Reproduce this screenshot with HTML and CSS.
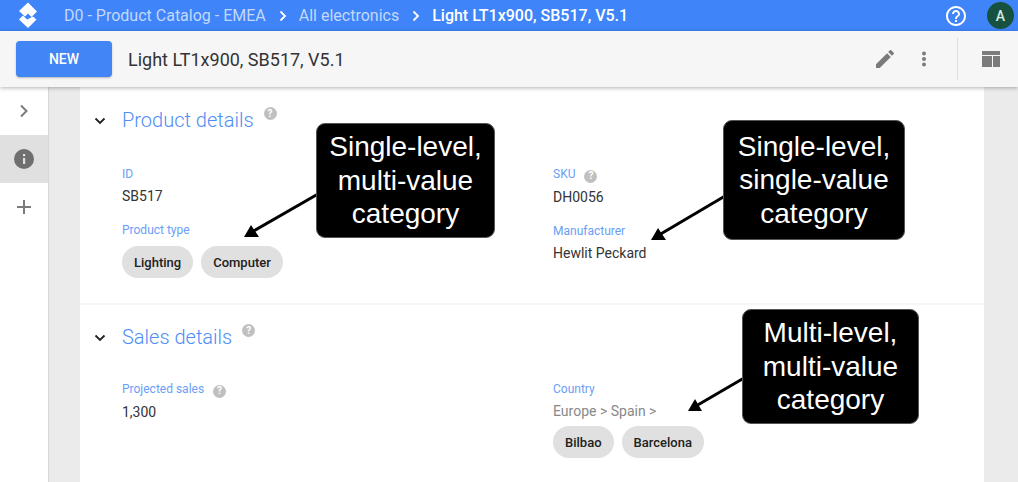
FILE: index.html
```html
<!DOCTYPE html>
<html lang="en">
<head>
<meta charset="utf-8">
<title>Light LT1x900, SB517, V5.1</title>
<link rel="stylesheet" href="styles.css">
</head>
<body>
<header class="topbar">
  <svg class="logo" width="20" height="26" viewBox="0 0 20 26"><path d="M10 0.500 L19 9.500 L13.500 15 L10 11.500 L7 14.500 L1 9 Z" fill="#fff"/><path d="M1 17.500 L5 13.500 L9 17.500 L15 14.500 L18.500 17.500 L10 26 Z" fill="#fff"/></svg>
  <nav class="crumbs">
    <span class="crumb">D0 - Product Catalog - EMEA</span>
    <svg class="crumb-sep" width="10" height="12" viewBox="0 0 10 12"><path d="M2.500 1.500 L7 6 L2.500 10.500" fill="none" stroke="#fff" stroke-width="1.800"/></svg>
    <span class="crumb">All electronics</span>
    <svg class="crumb-sep" width="10" height="12" viewBox="0 0 10 12"><path d="M2.500 1.500 L7 6 L2.500 10.500" fill="none" stroke="#fff" stroke-width="1.800"/></svg>
    <span class="crumb crumb-current">Light LT1x900, SB517, V5.1</span>
  </nav>
  <svg class="help" width="24" height="24" viewBox="0 0 24 24"><path fill="#fff" d="M11 18h2v-2h-2v2zm1-16C6.480 2 2 6.480 2 12s4.480 10 10 10 10-4.480 10-10S17.520 2 12 2zm0 18c-4.410 0-8-3.590-8-8s3.590-8 8-8 8 3.590 8 8-3.590 8-8 8zm0-14c-2.210 0-4 1.790-4 4h2c0-1.100.9-2 2-2s2 .9 2 2c0 2-3 1.750-3 5h2c0-2.250 3-2.500 3-5 0-2.210-1.790-4-4-4z"/></svg>
  <div class="avatar">A</div>
</header>

<div class="toolbar">
  <button class="new-btn">NEW</button>
  <h1 class="doc-title">Light LT1x900, SB517, V5.1</h1>
  <svg class="tool-edit" width="24" height="24" viewBox="0 0 24 24"><path fill="#7b7b7b" d="M3 17.250V21h3.750L17.810 9.940l-3.750-3.750L3 17.250zM20.710 7.040a1 1 0 0 0 0-1.410l-2.340-2.340a1 1 0 0 0-1.410 0l-1.830 1.830 3.750 3.750 1.830-1.830z"/></svg>
  <svg class="tool-more" width="24" height="24" viewBox="0 0 24 24"><circle cx="12" cy="6.500" r="2" fill="#7b7b7b"/><circle cx="12" cy="12" r="2" fill="#7b7b7b"/><circle cx="12" cy="17.500" r="2" fill="#7b7b7b"/></svg>
  <div class="tool-divider"></div>
  <svg class="tool-layout" width="18" height="16" viewBox="0 0 18 16"><path fill="#7b7b7b" d="M0 0h18v4H0zM0 5h10v11H0zM11 5h7v11h-7z"/></svg>
</div>

<div class="main">
  <aside class="rail">
    <div class="rail-item">
      <svg width="24" height="24" viewBox="0 0 24 24"><path d="M9 6.500 L14.500 12 L9 17.500" fill="none" stroke="#7b7b7b" stroke-width="2"/></svg>
    </div>
    <div class="rail-item rail-active">
      <svg width="24" height="24" viewBox="0 0 24 24"><circle cx="12" cy="12" r="10" fill="#6f6f6f"/><path fill="#e0e0e0" d="M11 11h2.200v6H11zM11 7h2.200v2.200H11z"/></svg>
    </div>
    <div class="rail-item">
      <svg width="24" height="24" viewBox="0 0 24 24"><path fill="#7b7b7b" d="M11 5h2v6h6v2h-6v6h-2v-6H5v-2h6z"/></svg>
    </div>
  </aside>

  <main class="card">
    <section class="section section-product">
      <div class="section-head">
        <svg class="chev" width="12" height="8" viewBox="0 0 12 8"><path d="M1.500 1.500 L6 6 L10.500 1.500" fill="none" stroke="#212121" stroke-width="1.800"/></svg>
        <h2 class="section-title">Product details</h2>
        <span class="q q-head">?</span>
      </div>
      <div class="fields">
        <div class="col">
          <div class="field">
            <div class="label">ID</div>
            <div class="value">SB517</div>
          </div>
          <div class="field">
            <div class="label">Product type</div>
            <div class="chips"><span class="chip">Lighting</span><span class="chip">Computer</span></div>
          </div>
        </div>
        <div class="col">
          <div class="field">
            <div class="label">SKU <span class="q">?</span></div>
            <div class="value">DH0056</div>
          </div>
          <div class="field">
            <div class="label">Manufacturer</div>
            <div class="value">Hewlit Peckard</div>
          </div>
        </div>
      </div>
    </section>
    <section class="section section-sales">
      <div class="section-head">
        <svg class="chev" width="12" height="8" viewBox="0 0 12 8"><path d="M1.500 1.500 L6 6 L10.500 1.500" fill="none" stroke="#212121" stroke-width="1.800"/></svg>
        <h2 class="section-title">Sales details</h2>
        <span class="q q-head">?</span>
      </div>
      <div class="fields">
        <div class="col">
          <div class="field">
            <div class="label">Projected sales <span class="q">?</span></div>
            <div class="value">1,300</div>
          </div>
        </div>
        <div class="col">
          <div class="field">
            <div class="label">Country</div>
            <div class="value value-muted">Europe &gt; Spain &gt;</div>
            <div class="chips chips-tight"><span class="chip">Bilbao</span><span class="chip">Barcelona</span></div>
          </div>
        </div>
      </div>
    </section>
  </main>
</div>

<div class="callout callout-a">Single-level,<br>multi-value<br>category</div>
<div class="callout callout-b">Single-level,<br>single-value<br>category</div>
<div class="callout callout-c">Multi-level,<br>multi-value<br>category</div>

<svg class="arrows" width="1018" height="482" viewBox="0 0 1018 482">
  <path d="M318 194 L252 232" stroke="#000" stroke-width="3" fill="none"/>
  <path d="M244 237 L251 225 L259 237 Z" fill="#000"/>
  <path d="M725 196 L659 235" stroke="#000" stroke-width="3" fill="none"/>
  <path d="M651 240 L658 228 L666 240 Z" fill="#000"/>
  <path d="M744 378 L696 406" stroke="#000" stroke-width="3" fill="none"/>
  <path d="M688 411 L695 399 L702 411 Z" fill="#000"/>
</svg>
</body>
</html>
```

FILE: styles.css
```css
* { box-sizing: border-box; }
html, body { margin: 0; height: 100%; }
body {
  width: 1018px;
  height: 482px;
  overflow: hidden;
  position: relative;
  font-family: Roboto, "Liberation Sans", sans-serif;
  background: #ebebeb;
  color: #212121;
}
.topbar {
  height: 31px;
  background: #3f84f8;
  display: flex;
  align-items: center;
  padding-left: 18px;
}
.logo { flex: none; margin-top: -2px; }
.crumbs {
  display: flex;
  align-items: center;
  margin-left: 26px;
  font-size: 16px;
  flex: 1;
}
.crumb { color: #c3d8fb; }
.crumb-current { color: #fff; font-weight: 500; }
.crumb-sep { margin: 0 11px 0 12px; flex: none; }
.help { flex: none; margin-right: 19px; }
.avatar {
  width: 27px;
  height: 27px;
  margin-right: 4px;
  border-radius: 50%;
  background: #17513f;
  color: #d9e8e2;
  font-size: 14px;
  font-weight: 500;
  display: flex;
  align-items: center;
  justify-content: center;
}
.toolbar {
  height: 56px;
  background: #f6f6f6;
  display: flex;
  align-items: center;
  padding-left: 16px;
  box-shadow: 0 1px 4px rgba(0,0,0,.3);
  position: relative;
  z-index: 2;
}
.new-btn {
  width: 96px;
  height: 36px;
  background: #4285f4;
  color: #fff;
  border: 0;
  border-radius: 4px;
  font: 500 14px Roboto, sans-serif;
  box-shadow: 0 1px 2px rgba(0,0,0,.25);
}
.doc-title {
  margin: 0 0 0 16px;
  font-size: 18px;
  font-weight: 400;
  color: #333;
  flex: 1;
}
.tool-edit { margin-right: 15px; }
.tool-more { margin-right: 21px; }
.tool-divider { width: 1px; height: 42px; background: #dedede; margin-right: 24px; }
.tool-layout { margin-right: 18px; }

.main { display: flex; height: 395px; }
.rail {
  width: 48px;
  flex: none;
  background: #fff;
  box-shadow: 1px 0 1px rgba(0,0,0,.08);
}
.rail-item {
  height: 48px;
  display: flex;
  align-items: center;
  justify-content: center;
}
.rail-active { background: #e0e0e0; }
.card {
  width: 904px;
  margin-left: 32px;
  background: #fff;
  flex: none;
}
.section { padding-left: 42px; position: relative; }
.section-product { height: 218px; border-bottom: 2px solid #f7f7f7; padding-top: 18px; }
.section-sales { padding-top: 17px; }
.section-head { display: flex; align-items: flex-start; height: 30px; position: relative; }
.chev { position: absolute; left: -28px; top: 12px; }
.section-title {
  margin: 0;
  font-size: 20px;
  font-weight: 300;
  color: #4d8df5;
  line-height: 30px;
}
.q {
  display: inline-flex;
  width: 13px;
  height: 13px;
  border-radius: 50%;
  background: #c0c0c0;
  color: #fff;
  font-size: 10px;
  font-weight: 700;
  align-items: center;
  justify-content: center;
  margin-left: 6px;
  vertical-align: -1px;
}
.q-head { margin-left: 10px; margin-top: 2px; flex: none; }
.fields { display: flex; margin-top: 31px; }
.section-sales .fields { margin-top: 29px; }
.col { width: 431px; flex: none; }
.field { margin-bottom: 16px; }
.label { font-size: 12px; line-height: 16px; color: #6a9ef6; }
.value { font-size: 14px; line-height: 20px; margin-top: 4px; color: #333; }
.value-muted { color: #888; }
.chips { display: flex; gap: 8px; margin-top: 8px; }
.chips-tight { margin-top: 5px; }
.chip {
  height: 32px;
  padding: 0 12px;
  border-radius: 16px;
  background: #e0e0e0;
  font-size: 13px;
  font-weight: 500;
  color: #212121;
  display: flex;
  align-items: center;
}
.callout {
  position: absolute;
  background: #000;
  color: #fff;
  font-family: "Liberation Sans", Arial, sans-serif;
  font-size: 28px;
  line-height: 33.500px;
  text-align: center;
  border-radius: 9px;
  border: 1px solid #555;
  display: flex;
  align-items: center;
  justify-content: center;
  z-index: 5;
}
.callout-a { left: 316px; top: 123px; width: 179px; height: 115px; }
.callout-b { left: 723px; top: 120px; width: 182px; height: 120px; }
.callout-c { left: 742px; top: 309px; width: 177px; height: 115px; }
.arrows { position: absolute; left: 0; top: 0; z-index: 4; pointer-events: none; }
```
